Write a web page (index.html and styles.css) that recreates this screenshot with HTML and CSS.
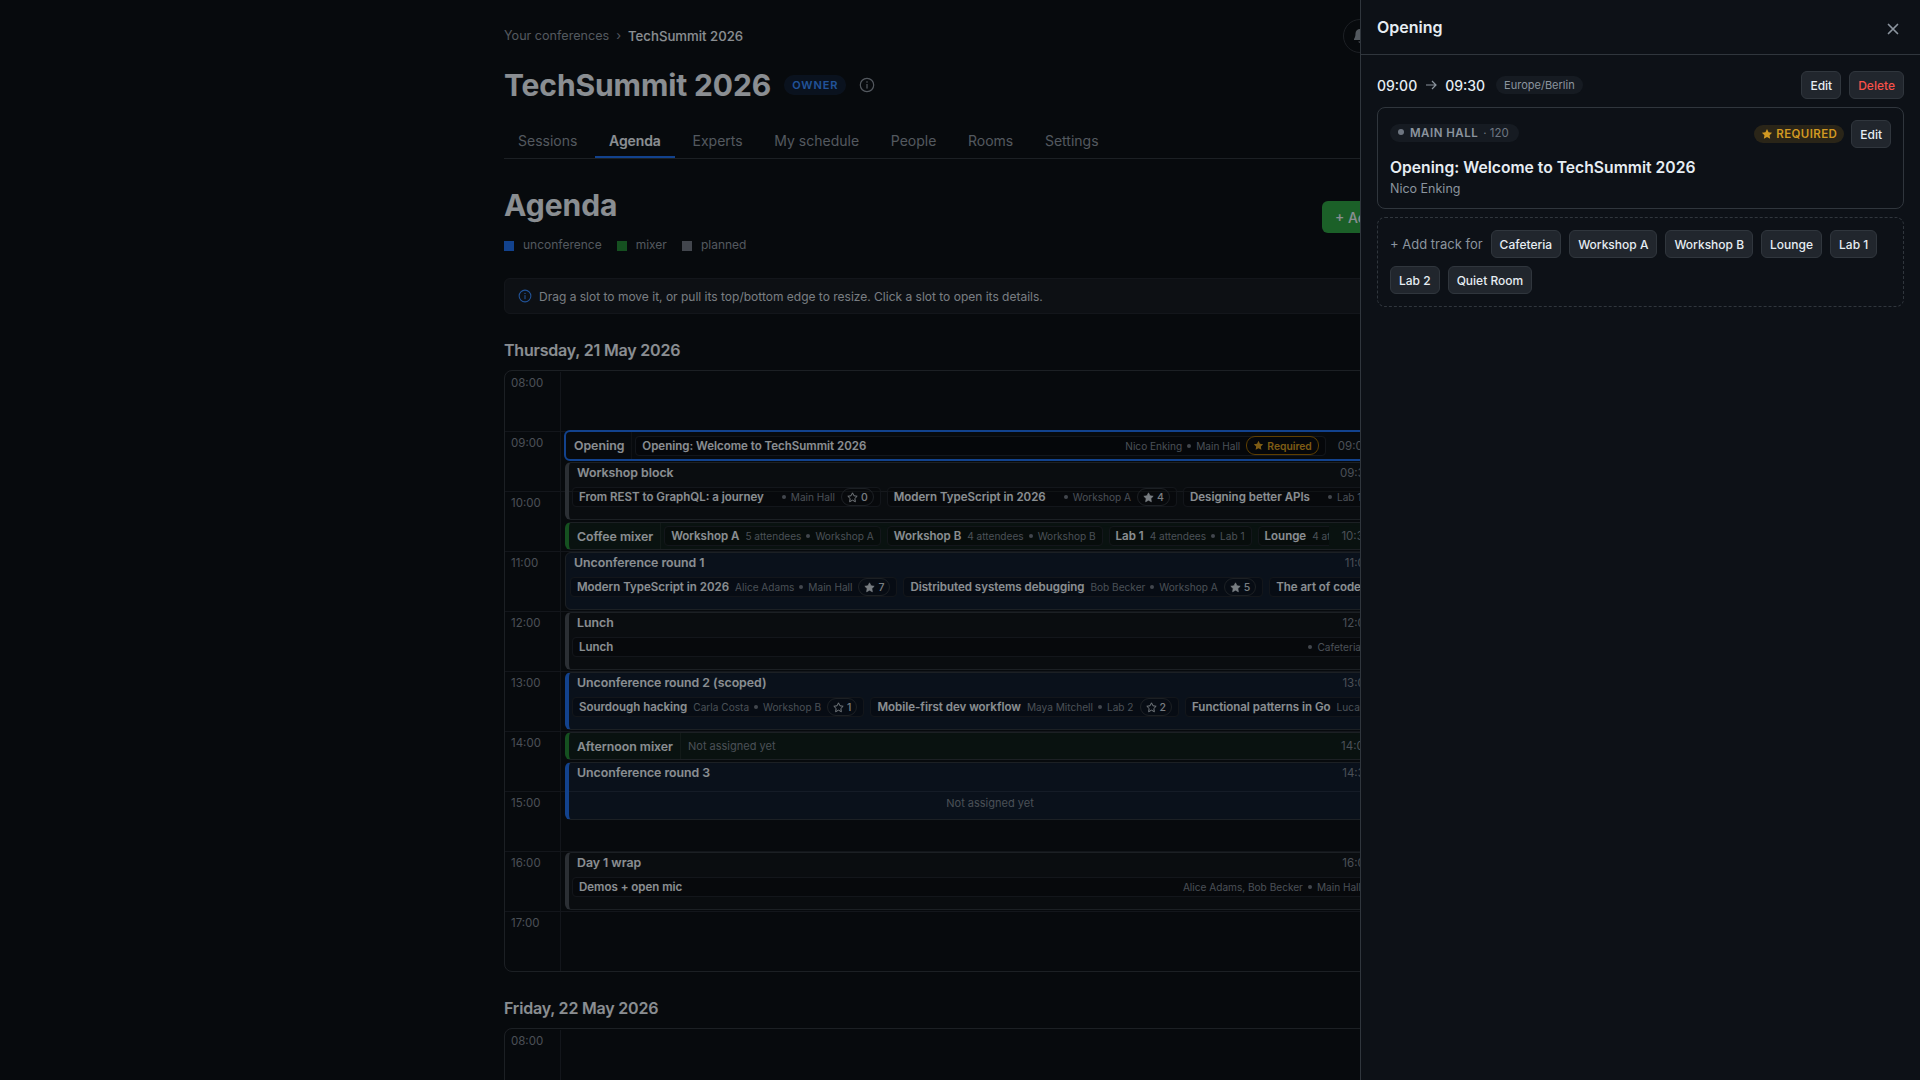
FILE: index.html

```html
<!DOCTYPE html>
<html lang="en">
<head>
  <meta charset="UTF-8">
  <title>TechSummit 2026 - Agenda</title>
  <link rel="stylesheet" href="styles.css">
</head>
<body>

<svg class="defs" width="0" height="0">
  <symbol id="star" viewBox="0 0 16 16">
    <path d="M8 1.2l2.1 4.3 4.7.7-3.4 3.3.8 4.7L8 11.900l-4.200 2.300.8-4.700L1.200 6.200l4.700-.7z" stroke-linejoin="round"/>
  </symbol>
  <symbol id="info" viewBox="0 0 16 16">
    <circle cx="8" cy="8" r="6.7" fill="none" stroke="currentColor" stroke-width="1.2"/>
    <rect x="7.4" y="7" width="1.2" height="4.6" fill="currentColor"/>
    <circle cx="8" cy="5" r=".8" fill="currentColor"/>
  </symbol>
</svg>

<div class="page">
  <div class="topbar">
    <div class="crumbs">
      <span>Your conferences</span>
      <span class="crumb-sep">›</span>
      <span class="crumb-current">TechSummit 2026</span>
    </div>
    <div class="top-actions">
      <span class="bell">
        <svg width="16" height="16" viewBox="0 0 16 16" fill="currentColor"><path d="M8 1a4.500 4.500 0 0 0-4.500 4.500c0 2.500-.6 4.200-1.500 5.500v1h12v-1c-.9-1.300-1.500-3-1.500-5.500A4.500 4.500 0 0 0 8 1zM6.300 13.500a1.800 1.800 0 0 0 3.400 0z"/></svg>
      </span>
      <span class="avatar"></span>
    </div>
  </div>

  <div class="title-row">
    <h1>TechSummit 2026</h1>
    <span class="role">OWNER</span>
    <svg class="title-info" width="16" height="16"><use href="#info"/></svg>
  </div>

  <div class="tabs">
    <a class="tab">Sessions</a>
    <a class="tab active">Agenda</a>
    <a class="tab">Experts</a>
    <a class="tab">My schedule</a>
    <a class="tab">People</a>
    <a class="tab">Rooms</a>
    <a class="tab">Settings</a>
  </div>

  <div class="agenda-head">
    <div>
      <h2>Agenda</h2>
      <div class="legend">
        <span class="legend-item"><i class="sq sq-blue"></i>unconference</span>
        <span class="legend-item"><i class="sq sq-green"></i>mixer</span>
        <span class="legend-item"><i class="sq sq-gray"></i>planned</span>
      </div>
    </div>
    <button class="add-btn">+ Add slot</button>
  </div>

  <div class="notice">
    <svg width="14" height="14"><use href="#info"/></svg>
    Drag a slot to move it, or pull its top/bottom edge to resize. Click a slot to open its details.
  </div>

  <h3>Thursday, 21 May 2026</h3>
  <div class="day">
    <div class="hours">
      <div class="hour"><span>08:00</span></div>
      <div class="hour"><span>09:00</span></div>
      <div class="hour"><span>10:00</span></div>
      <div class="hour"><span>11:00</span></div>
      <div class="hour"><span>12:00</span></div>
      <div class="hour"><span>13:00</span></div>
      <div class="hour"><span>14:00</span></div>
      <div class="hour"><span>15:00</span></div>
      <div class="hour"><span>16:00</span></div>
      <div class="hour"><span>17:00</span></div>
    </div>
    <div class="slots">

      <div class="slot slot-selected slot-row" style="grid-row: 3 / span 1">
        <div class="slot-label">Opening</div>
        <div class="row-cards">
          <div class="card card-fill">
            <b>Opening: Welcome to TechSummit 2026</b>
            <span class="meta meta-end">Nico Enking<i class="dot"></i>Main Hall</span>
            <span class="required-pill"><svg width="11" height="11"><use href="#star"/></svg>Required</span>
          </div>
        </div>
        <span class="slot-time">09:00</span>
      </div>

      <div class="slot slot-plan" style="grid-row: 4 / span 2">
        <div class="slot-head"><span>Workshop block</span><span class="slot-time">09:30</span></div>
        <div class="cards">
          <div class="card"><b>From REST to GraphQL: a journey</b><span class="meta meta-room"><i class="dot dot-lead"></i>Main Hall</span><span class="votes"><svg class="star-line" width="11" height="11"><use href="#star"/></svg>0</span></div>
          <div class="card"><b>Modern TypeScript in 2026</b><span class="meta meta-room"><i class="dot dot-lead"></i>Workshop A</span><span class="votes"><svg width="11" height="11"><use href="#star"/></svg>4</span></div>
          <div class="card"><b>Designing better APIs</b><span class="meta meta-room"><i class="dot dot-lead"></i>Lab 1</span><span class="votes"><svg class="star-line" width="11" height="11"><use href="#star"/></svg>3</span></div>
        </div>
      </div>

      <div class="slot slot-mixer slot-row" style="grid-row: 6 / span 1">
        <div class="slot-label">Coffee mixer</div>
        <div class="row-cards">
          <div class="card"><b>Workshop A</b><span class="meta">5 attendees<i class="dot"></i>Workshop A</span></div>
          <div class="card"><b>Workshop B</b><span class="meta">4 attendees<i class="dot"></i>Workshop B</span></div>
          <div class="card"><b>Lab 1</b><span class="meta">4 attendees<i class="dot"></i>Lab 1</span></div>
          <div class="card"><b>Lounge</b><span class="meta">4 attendees<i class="dot"></i>Lounge</span></div>
        </div>
        <span class="slot-time">10:30</span>
      </div>

      <div class="slot slot-unconf slot-thin" style="grid-row: 7 / span 2">
        <div class="slot-head"><span>Unconference round 1</span><span class="slot-time">11:00</span></div>
        <div class="cards">
          <div class="card"><b>Modern TypeScript in 2026</b><span class="meta">Alice Adams<i class="dot"></i>Main Hall</span><span class="votes"><svg width="11" height="11"><use href="#star"/></svg>7</span></div>
          <div class="card"><b>Distributed systems debugging</b><span class="meta">Bob Becker<i class="dot"></i>Workshop A</span><span class="votes"><svg width="11" height="11"><use href="#star"/></svg>5</span></div>
          <div class="card"><b>The art of code review</b><span class="meta">Dana Dietz<i class="dot"></i>Lab 1</span></div>
        </div>
      </div>

      <div class="slot slot-plan" style="grid-row: 9 / span 2">
        <div class="slot-head"><span>Lunch</span><span class="slot-time">12:00</span></div>
        <div class="cards">
          <div class="card card-fill"><b>Lunch</b><span class="meta meta-end"><i class="dot dot-lead"></i>Cafeteria</span></div>
        </div>
      </div>

      <div class="slot slot-unconf" style="grid-row: 11 / span 2">
        <div class="slot-head"><span>Unconference round 2 (scoped)</span><span class="slot-time">13:00</span></div>
        <div class="cards">
          <div class="card"><b>Sourdough hacking</b><span class="meta">Carla Costa<i class="dot"></i>Workshop B</span><span class="votes"><svg class="star-line" width="11" height="11"><use href="#star"/></svg>1</span></div>
          <div class="card"><b>Mobile-first dev workflow</b><span class="meta">Maya Mitchell<i class="dot"></i>Lab 2</span><span class="votes"><svg class="star-line" width="11" height="11"><use href="#star"/></svg>2</span></div>
          <div class="card"><b>Functional patterns in Go</b><span class="meta">Luca Lang<i class="dot"></i>Lab 1</span></div>
        </div>
      </div>

      <div class="slot slot-mixer slot-row" style="grid-row: 13 / span 1">
        <div class="slot-label">Afternoon mixer</div>
        <div class="row-cards"><span class="empty-inline">Not assigned yet</span></div>
        <span class="slot-time">14:00</span>
      </div>

      <div class="slot slot-unconf" style="grid-row: 14 / span 2">
        <div class="slot-head"><span>Unconference round 3</span><span class="slot-time">14:30</span></div>
        <div class="empty">Not assigned yet</div>
      </div>

      <div class="slot slot-plan" style="grid-row: 17 / span 2">
        <div class="slot-head"><span>Day 1 wrap</span><span class="slot-time">16:00</span></div>
        <div class="cards">
          <div class="card card-fill"><b>Demos + open mic</b><span class="meta meta-end">Alice Adams, Bob Becker<i class="dot"></i>Main Hall</span></div>
        </div>
      </div>

    </div>
  </div>

  <h3>Friday, 22 May 2026</h3>
  <div class="day">
    <div class="hours">
      <div class="hour"><span>08:00</span></div>
      <div class="hour"><span>09:00</span></div>
    </div>
  </div>
</div>

<div class="scrim"></div>

<aside class="panel">
  <div class="panel-head">
    <span class="panel-title">Opening</span>
    <svg class="close" width="12" height="12" viewBox="0 0 12 12"><path d="M1.500 1.500l9 9M10.500 1.500l-9 9" stroke="currentColor" stroke-width="1.700" stroke-linecap="round"/></svg>
  </div>
  <div class="panel-body">
    <div class="time-row">
      <span class="time">09:00</span>
      <svg class="arrow" width="12" height="12" viewBox="0 0 12 12" fill="none" stroke="currentColor" stroke-width="1.200"><path d="M1 6h10M7 2l4 4-4 4"/></svg>
      <span class="time">09:30</span>
      <span class="tz">Europe/Berlin</span>
      <span class="time-actions">
        <button class="btn">Edit</button>
        <button class="btn btn-danger">Delete</button>
      </span>
    </div>

    <div class="track-card">
      <div class="track-top">
        <span class="room-pill"><i class="dot dot-lg"></i><b>MAIN HALL</b><span class="room-cap">· 120</span></span>
        <span class="track-actions">
          <span class="required-tag"><svg width="12" height="12"><use href="#star"/></svg>REQUIRED</span>
          <button class="btn">Edit</button>
        </span>
      </div>
      <div class="track-title">Opening: Welcome to TechSummit 2026</div>
      <div class="track-speaker">Nico Enking</div>
    </div>

    <div class="add-track">
      <span class="add-label">+ Add track for</span>
      <button class="btn">Cafeteria</button>
      <button class="btn">Workshop A</button>
      <button class="btn">Workshop B</button>
      <button class="btn">Lounge</button>
      <button class="btn">Lab 1</button>
      <button class="btn">Lab 2</button>
      <button class="btn">Quiet Room</button>
    </div>
  </div>
</aside>

</body>
</html>
```

FILE: styles.css

```css
html, body {
  margin: 0;
  padding: 0;
  height: 100%;
  overflow: hidden;
}
body {
  background: #0d1117;
  color: #e6edf3;
  font-family: Inter, "Noto Sans", sans-serif;
  font-size: 14px;
}
.defs { position: absolute; }
.page {
  width: 912px;
  margin: 0 auto;
}

.topbar {
  display: flex;
  justify-content: space-between;
  align-items: center;
  padding-top: 20px;
  height: 32px;
}
.crumbs {
  display: flex;
  gap: 7px;
  font-size: 12.6px;
  color: #8b949e;
}
.crumb-current { color: #e6edf3; font-size: 13.2px; font-weight: 500; }
.top-actions { display: flex; gap: 7px; align-items: center; }
.bell {
  width: 32px;
  height: 32px;
  border: 1px solid #30363d;
  border-radius: 50%;
  display: flex;
  align-items: center;
  justify-content: center;
  color: #8b949e;
}
.avatar {
  width: 32px;
  height: 32px;
  border-radius: 50%;
  background: #21262d;
}

.title-row {
  display: flex;
  align-items: center;
  margin-top: 13px;
  height: 40px;
}
h1 {
  margin: 0;
  font-size: 30px;
  line-height: 40px;
  font-weight: 700;
  letter-spacing: -0.1px;
}
.role {
  margin-left: 13px;
  padding: 3px 8px;
  border-radius: 10px;
  background: rgba(56,139,253,0.12);
  color: #388bfd;
  font-size: 11px;
  font-weight: 600;
  letter-spacing: 0.9px;
}
.title-info { margin-left: 13px; color: #8b949e; }

.tabs {
  display: flex;
  gap: 3.7px;
  margin-top: 19px;
  border-bottom: 1px solid #30363d;
}
.tab {
  padding: 0 14px;
  height: 34px;
  line-height: 34px;
  color: #8b949e;
  box-sizing: border-box;
}
.tab.active {
  color: #e6edf3;
  font-weight: 600;
  letter-spacing: -0.1px;
  border-bottom: 2px solid #1f6feb;
}

.agenda-head {
  display: flex;
  justify-content: space-between;
  align-items: flex-start;
  margin-top: 26px;
}
h2 {
  margin: 0;
  font-size: 30px;
  line-height: 40px;
  font-weight: 700;
}
.legend {
  display: flex;
  gap: 15px;
  margin-top: 12px;
  font-size: 12px;
  line-height: 16px;
  color: #8b949e;
}
.legend-item { display: flex; align-items: center; gap: 9px; }
.sq { width: 10px; height: 10px; display: block; margin-top: 2px; }
.sq-blue { background: #1f6feb; }
.sq-green { background: #238636; }
.sq-gray { background: #6e7681; }
.add-btn {
  margin-top: 16px;
  width: 94px;
  height: 32px;
  background: #2ea043;
  color: #e6edf3;
  border: none;
  border-radius: 6px;
  font: 500 14px Inter, sans-serif;
}

.notice {
  display: flex;
  align-items: center;
  gap: 7px;
  margin-top: 25px;
  height: 36px;
  padding-left: 13px;
  box-sizing: border-box;
  background: #161b22;
  border: 1px solid #21262d;
  border-radius: 6px;
  font-size: 12px;
  color: #c9d1d9;
}
.notice svg { color: #388bfd; flex-shrink: 0; }

h3 {
  margin: 24px 0 8px;
  font-size: 16px;
  line-height: 24px;
  font-weight: 600;
  letter-spacing: -0.2px;
}

/* day calendar: hour rows underneath, slots in a half-hour grid on top */
.day {
  display: grid;
  border: 1px solid #30363d;
  border-radius: 8px;
  overflow: hidden;
}
.hours { grid-area: 1 / 1; }
.hour {
  height: 60px;
  box-sizing: border-box;
  border-top: 1px solid #21262d;
}
.hour:first-child { border-top-color: transparent; }
.hour span {
  display: block;
  width: 56px;
  height: 100%;
  box-sizing: border-box;
  padding: 4px 0 0 6px;
  border-right: 1px solid #21262d;
  font-size: 11.5px;
  line-height: 14px;
  color: #7d8590;
}
.slots {
  grid-area: 1 / 1;
  margin-left: 56px;
  min-width: 0;
  display: grid;
  grid-template-columns: minmax(0, 1fr);
  grid-template-rows: repeat(20, 30px);
}

.slot {
  margin: 1px 3px 1px 4px;
  min-width: 0;
  border: 1px solid #30363d;
  border-radius: 6px;
  overflow: hidden;
  box-sizing: border-box;
  font-size: 12.3px;
  font-weight: 600;
}
.slot-plan { border-left: 4px solid #484f58; background: rgba(255,255,255,0.025); }
.slot-mixer { border-left: 4px solid #238636; background: rgba(46,160,67,0.1); }
.slot-unconf { border-left: 4px solid #1f6feb; background: rgba(56,139,253,0.1); }
.slot-thin { border-left: 1px solid #30363d; }
.slot-selected {
  margin: -1px 3px 0 3px;
  border: 2px solid #1f6feb;
}
.slot-selected .slot-label { padding-left: 8px; }
.slot-row { display: flex; align-items: center; }
.slot-label {
  padding: 0 7px 0 8px;
  height: 100%;
  display: flex;
  align-items: center;
  white-space: nowrap;
  border-right: 1px solid rgba(255,255,255,0.06);
}
.row-cards {
  flex: 1;
  min-width: 0;
  display: flex;
  gap: 6px;
  padding-left: 3px;
  overflow: hidden;
}
.slot-head {
  display: flex;
  justify-content: space-between;
  padding: 2px 8px 6px;
  line-height: 16px;
}
.slot-time {
  margin-right: 31px;
  font-size: 11.5px;
  font-weight: 400;
  color: #7d8590;
}
.slot-row .slot-time { margin-right: 40px; padding-left: 12px; }

.cards {
  display: flex;
  gap: 6px;
  padding: 0 43px 0 3px;
}
.slot-thin .cards { padding-left: 4px; }
.card {
  display: flex;
  align-items: center;
  flex-shrink: 0;
  height: 20px;
  box-sizing: border-box;
  padding: 0 6px;
  border: 1px solid #21262d;
  border-radius: 4px;
  background: rgba(0,0,0,0.25);
  font-size: 11.5px;
  white-space: nowrap;
}
.card b { font-weight: 600; }
.card-fill { flex: 1; flex-shrink: 1; min-width: 0; }
.meta {
  display: flex;
  align-items: center;
  margin-left: 6px;
  font-size: 10.1px;
  font-weight: 400;
  color: #7d8590;
}
.meta-room { margin-left: 18px; }
.meta-end { margin-left: auto; }
.dot {
  display: inline-block;
  width: 4px;
  height: 4px;
  margin: 0 5px;
  border-radius: 50%;
  background: #6e7681;
}
.dot-lead { margin-left: 0; }
.votes {
  display: flex;
  align-items: center;
  gap: 3px;
  margin-left: 6px;
  padding: 0 5px;
  height: 16px;
  border: 1px solid #30363d;
  border-radius: 9px;
  font-size: 10.5px;
  font-weight: 500;
  color: #c9d1d9;
}
.votes svg { fill: currentColor; stroke: currentColor; }
.votes svg.star-line { fill: none; stroke-width: 1.400; }
.required-pill {
  display: flex;
  align-items: center;
  gap: 3px;
  margin-left: 6px;
  padding: 0 6px;
  height: 17px;
  border: 1px solid #9e6a03;
  border-radius: 9px;
  font-size: 10.3px;
  font-weight: 600;
  color: #d29922;
}
.required-pill svg { fill: currentColor; }
.empty-inline { padding-left: 4px; font-size: 11px; font-weight: 400; color: #7d8590; }
.empty {
  text-align: center;
  margin-top: 1px;
  line-height: 30px;
  font-size: 11px;
  font-weight: 400;
  color: #7d8590;
}

.scrim {
  position: fixed;
  inset: 0;
  background: rgba(0,0,0,0.4);
}

.panel {
  position: fixed;
  top: 0;
  right: 0;
  bottom: 0;
  width: 560px;
  box-sizing: border-box;
  background: #0d1117;
  border-left: 1px solid #30363d;
}
.panel-head {
  height: 55px;
  box-sizing: border-box;
  padding: 0 16px;
  display: flex;
  justify-content: space-between;
  align-items: center;
  border-bottom: 1px solid #30363d;
}
.panel-title {
  font-size: 16px;
  font-weight: 600;
  margin-top: -1px;
}
.close { color: #8b949e; margin: 4px 5px 0 0; }
.panel-body { padding: 16px; }

.time-row {
  display: flex;
  align-items: center;
  height: 28px;
}
.time { font-size: 14px; font-weight: 500; }
.arrow { margin: 0 8px; color: #8b949e; }
.tz {
  margin-left: 11px;
  padding: 2px 8px;
  border-radius: 9px;
  background: #161b22;
  font-size: 11px;
  color: #8b949e;
}
.time-actions { margin-left: auto; display: flex; gap: 8px; }
.btn {
  height: 28px;
  padding: 0 8px;
  box-sizing: border-box;
  background: #21262d;
  border: 1px solid #30363d;
  border-radius: 6px;
  color: #e6edf3;
  font: 500 12px Inter, sans-serif;
  white-space: nowrap;
}
.btn-danger { color: #f85149; }

.track-card {
  margin-top: 8px;
  height: 102px;
  box-sizing: border-box;
  padding: 12px;
  border: 1px solid #30363d;
  border-radius: 8px;
}
.track-top {
  display: flex;
  justify-content: space-between;
  align-items: flex-start;
}
.room-pill {
  display: flex;
  align-items: center;
  height: 18px;
  margin-top: 4px;
  padding: 0 10px 0 8px;
  border-radius: 9px;
  background: #161b22;
  font-size: 11.5px;
  color: #8b949e;
}
.room-pill b { font-weight: 600; letter-spacing: 0.5px; }
.room-cap { margin-left: 5px; font-weight: 400; color: #6e7681; }
.dot-lg { width: 6px; height: 6px; margin: -2px 6px 0 0; }
.track-actions { display: flex; align-items: center; gap: 7px; }
.required-tag {
  display: flex;
  align-items: center;
  gap: 3px;
  height: 18px;
  padding: 0 7px;
  border-radius: 9px;
  background: rgba(210,153,34,0.15);
  color: #d29922;
  font-size: 11.5px;
  font-weight: 600;
  letter-spacing: 0.4px;
}
.required-tag svg { fill: currentColor; }
.track-title {
  margin-top: 9px;
  font-size: 15.7px;
  line-height: 22px;
  font-weight: 600;
}
.track-speaker {
  margin-top: 1px;
  font-size: 12.5px;
  line-height: 18px;
  color: #8b949e;
}

.add-track {
  margin-top: 8px;
  box-sizing: border-box;
  padding: 12px;
  border: 1px dashed #30363d;
  border-radius: 8px;
  display: flex;
  flex-wrap: wrap;
  align-items: center;
  gap: 8px;
}
.add-label { font-size: 13px; color: #8b949e; }
```
